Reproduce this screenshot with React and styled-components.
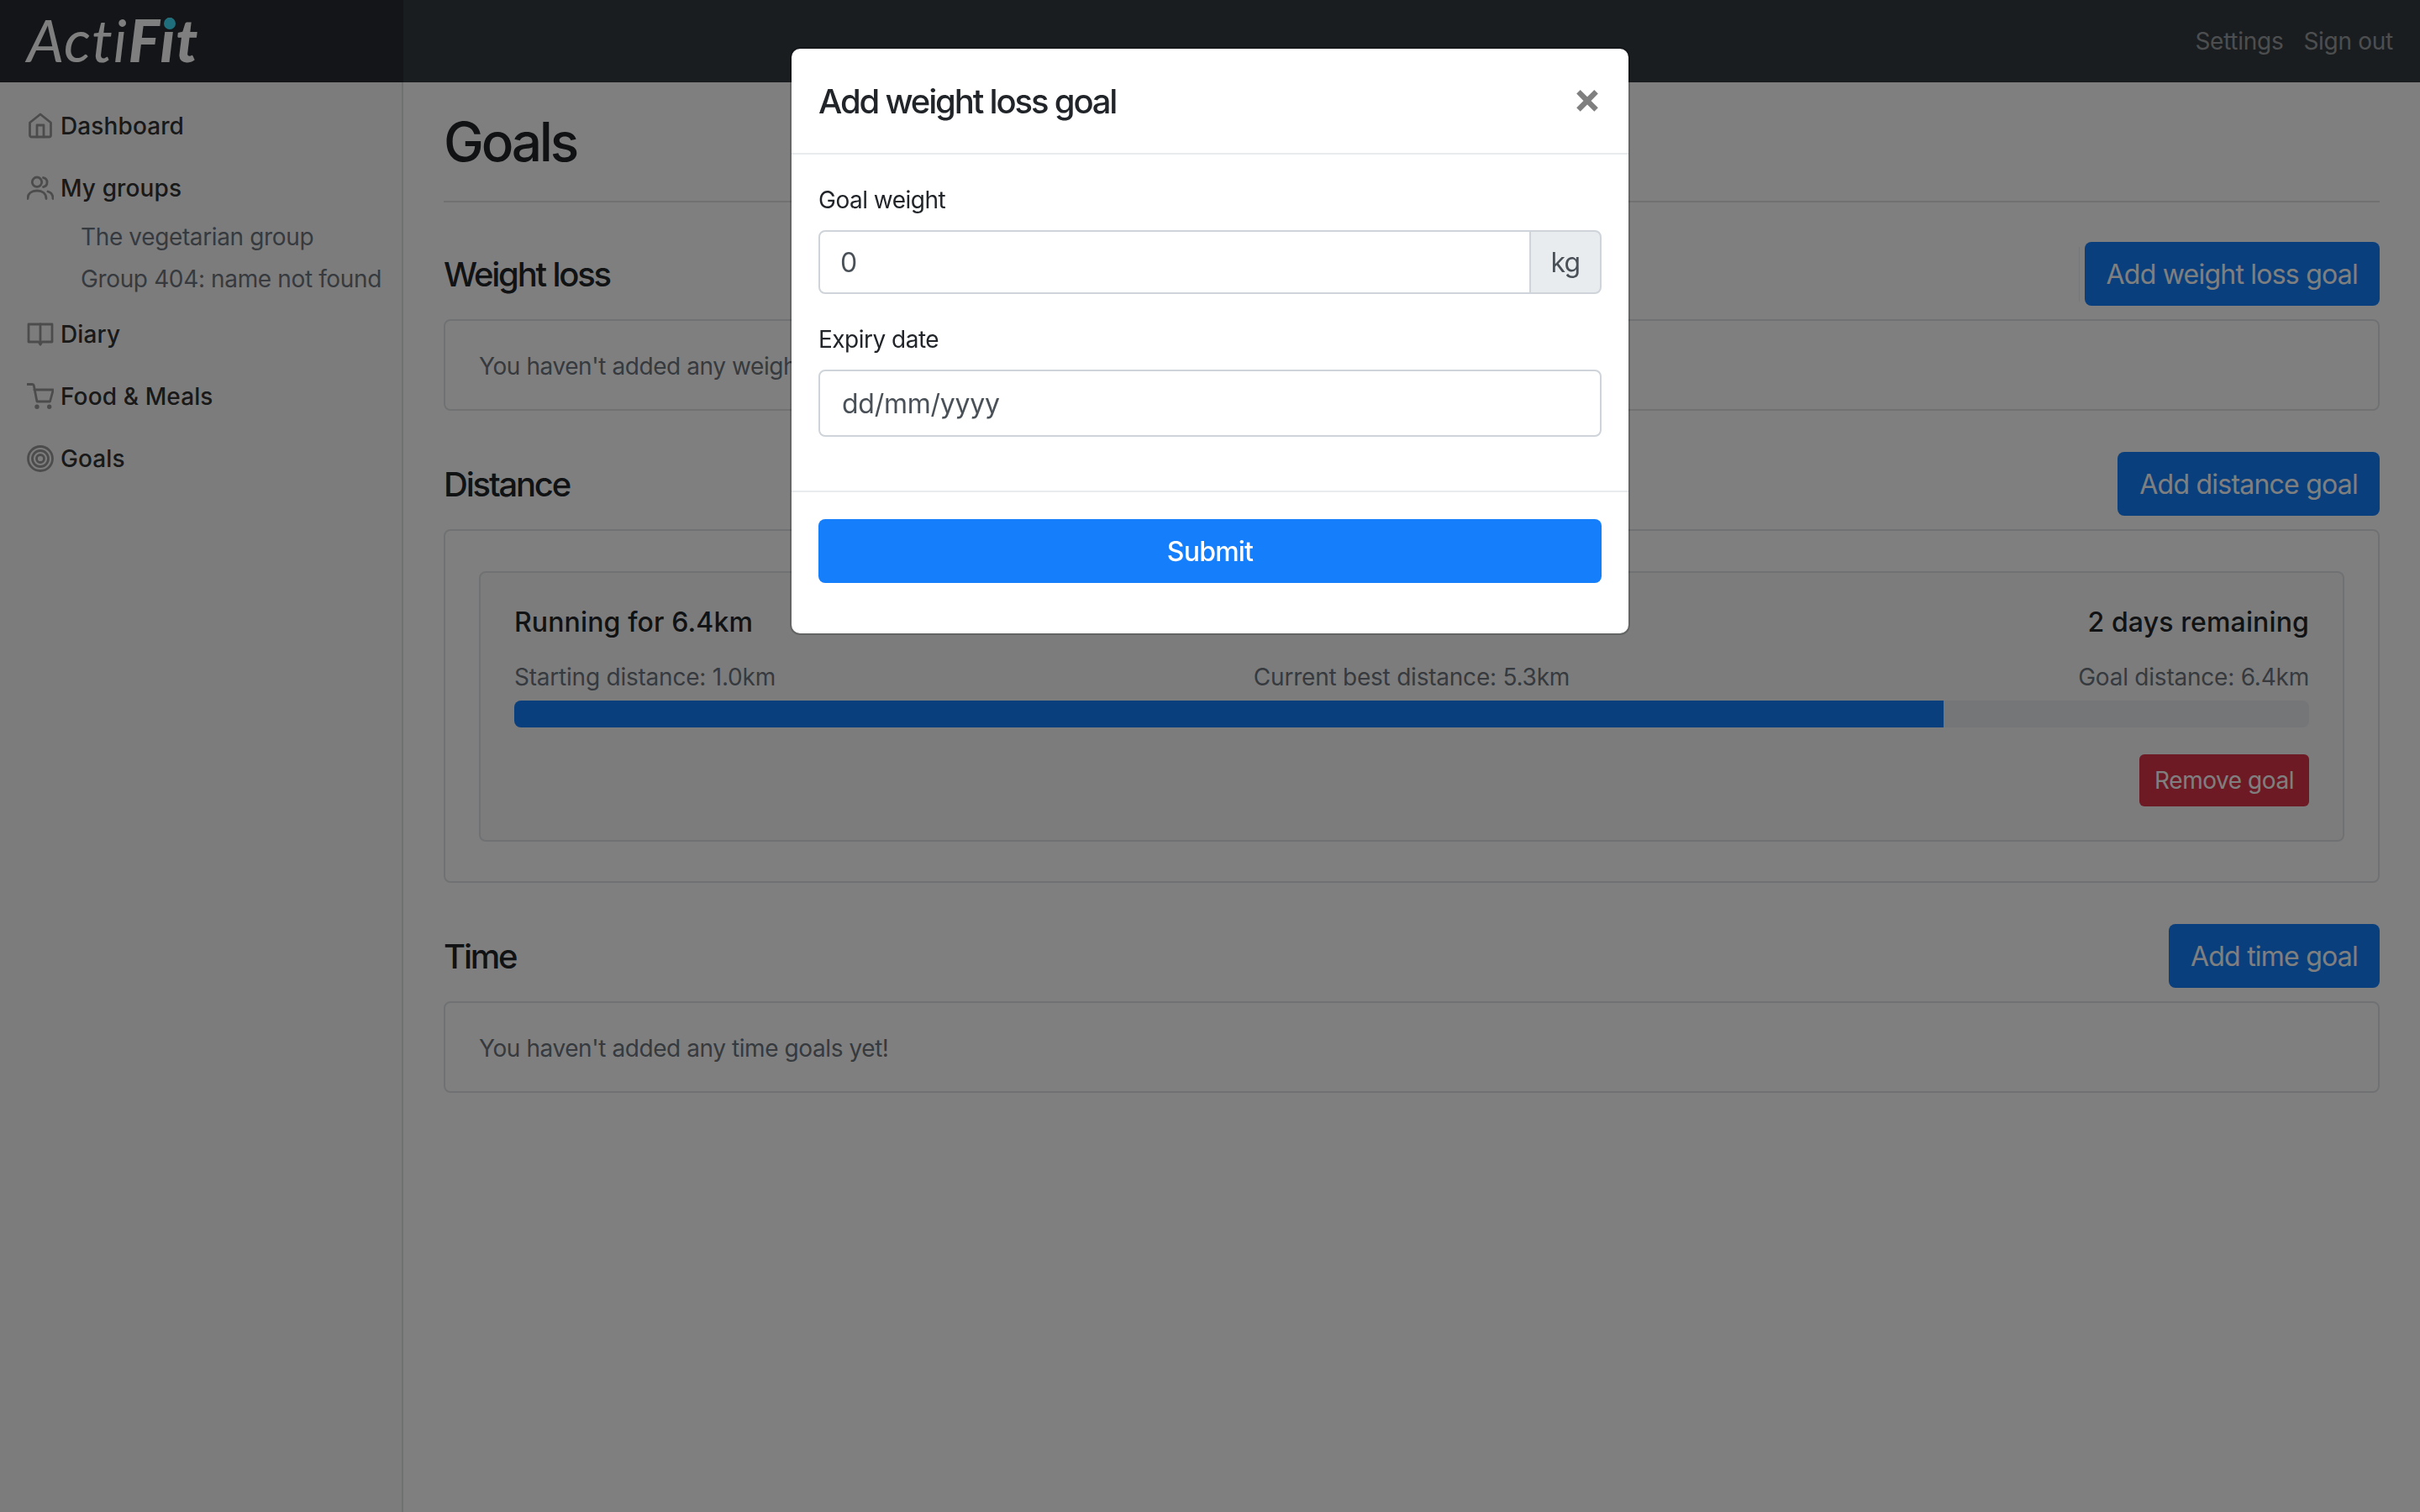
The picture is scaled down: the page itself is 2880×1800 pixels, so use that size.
import React from "react";
import styled, { createGlobalStyle } from "styled-components";

const GlobalStyle = createGlobalStyle`
    html, body {
        margin: 0;
        padding: 0;
        background: #fff;
        font-family: Inter, "Liberation Sans", sans-serif;
        color: #212529;
    }
    * { box-sizing: border-box; }
`;

const Page = styled.div`
    width: 2880px;
    height: 1800px;
    display: flex;
    flex-direction: column;
    overflow: hidden;
`;

const Navbar = styled.header`
    height: 98px;
    flex: none;
    display: flex;
    align-items: center;
    background: #343a40;
`;

const Brand = styled.div`
    position: relative;
    width: 480px;
    height: 100%;
    padding: 0 0 4px 32px;
    display: flex;
    align-items: center;
    background: rgba(0, 0, 0, 0.25);
    color: #fff;
    font-family: Lato, sans-serif;
    font-style: italic;
    font-size: 70px;
    line-height: 1;
`;

const BrandLight = styled.span`
    font-weight: 400;
    letter-spacing: 1px;
`;

const BrandBold = styled.span`
    margin-left: 1px;
    font-weight: 900;
    letter-spacing: 1px;
`;

// teal dot that sits over the i of "Fit"
const BrandDot = styled.span`
    position: absolute;
    left: 195px;
    top: 21px;
    width: 14px;
    height: 14px;
    border-radius: 50%;
    background: #3cdcf8;
`;

const NavLinks = styled.nav`
    margin-left: auto;
    padding-right: 32px;
    display: flex;
    gap: 24px;
`;

const NavLink = styled.a`
    font-size: 28px;
    line-height: 42px;
    letter-spacing: -0.01em;
    color: rgba(255, 255, 255, 0.5);
`;

const Body = styled.div`
    flex: 1;
    display: flex;
`;

const Sidebar = styled.aside`
    width: 480px;
    flex: none;
    padding-top: 15px;
    background: #f8f9fa;
    border-right: 2px solid #dfe0e1;
`;

const SideLink = styled.a`
    height: 74px;
    padding-left: 32px;
    display: flex;
    align-items: center;
    gap: 8px;
    font-size: 28px;
    font-weight: 500;
    letter-spacing: 0.004em;
    color: #333;
`;

const SubLink = styled.a`
    display: block;
    height: 42px;
    margin-bottom: 8px;
    padding-left: 96px;
    font-size: 28px;
    line-height: 42px;
    letter-spacing: -0.013em;
    color: #6c757d;
`;

const Icon = styled.svg`
    width: 32px;
    height: 32px;
    flex: none;
    fill: none;
    stroke: #999;
    stroke-width: 2.8;
    stroke-linecap: round;
    stroke-linejoin: round;
`;

const Main = styled.main`
    flex: 1;
    min-width: 0;
    padding: 0 48px;
`;

const PageHeader = styled.div`
    padding: 32px 0 16px;
    margin-bottom: 47px;
    border-bottom: 2px solid #dee2e6;
`;

const PageTitle = styled.h1`
    margin: 0 0 16px;
    font-size: 64px;
    font-weight: 500;
    line-height: 77px;
    letter-spacing: -0.05em;
`;

const Section = styled.section`
    margin-bottom: 49px;
`;

const SectionHead = styled.div`
    margin-bottom: 16px;
    display: flex;
    align-items: center;
    justify-content: space-between;
`;

const SectionTitle = styled.h2`
    margin: 0;
    font-size: 40px;
    font-weight: 500;
    letter-spacing: -0.055em;
`;

const SectionTools = styled.div`
    display: flex;
    align-items: center;
    gap: 6px;
`;

const ToolDivider = styled.span`
    width: 1px;
    height: 65px;
    background: #dee2e6;
    opacity: 0.6;
`;

const Button = styled.button`
    height: ${(p) => (p.$small ? "62px" : "76px")};
    width: ${(p) => (p.$block ? "100%" : "auto")};
    padding: 0 ${(p) => (p.$small ? "18px" : "26px")};
    border: none;
    border-radius: ${(p) => (p.$small ? "6px" : "8px")};
    background: ${(p) => (p.$danger ? "#dc344a" : "#157efb")};
    color: #fff;
    font-family: inherit;
    font-size: ${(p) => (p.$small ? "28px" : "32px")};
    font-weight: ${(p) => (p.$block ? 500 : 400)};
    letter-spacing: ${(p) => (p.$small ? "-0.016em" : "-0.024em")};
`;

const Panel = styled.div`
    padding: ${(p) => (p.$nested ? "48px 40px 47px" : "33px 40px 30px")};
    border: 2px solid #dee2e6;
    border-radius: 8px;
`;

const EmptyText = styled.p`
    margin: 0;
    font-size: 28px;
    line-height: 42px;
    letter-spacing: -0.015em;
    color: #6c757d;
    white-space: nowrap;
`;

const GoalCard = styled.div`
    padding: 40px;
    border: 2px solid #dee2e6;
    border-radius: 8px;
    background: #f8f9fa;
`;

const GoalHead = styled.div`
    margin-bottom: 25px;
    display: flex;
    justify-content: space-between;
    font-size: 32px;
    font-weight: 500;
    line-height: 38px;
    letter-spacing: 0.004em;
`;

const GoalStats = styled.div`
    margin-bottom: 7px;
    display: grid;
    grid-template-columns: 1fr auto 1fr;
    font-size: 28px;
    line-height: 42px;
    letter-spacing: -0.008em;
    color: #6c757d;
`;

const StatRight = styled.span`
    text-align: right;
`;

const Progress = styled.div`
    height: 32px;
    margin-bottom: 32px;
    border-radius: 8px;
    background: #e9ecef;
    overflow: hidden;
`;

const ProgressBar = styled.div`
    height: 100%;
    background: #157efb;
`;

const GoalActions = styled.div`
    display: flex;
    justify-content: flex-end;
`;

const Backdrop = styled.div`
    position: fixed;
    inset: 0;
    background: rgba(0, 0, 0, 0.5);
`;

const Modal = styled.div`
    width: 1000px;
    margin: 56px auto 0;
    border: 2px solid rgba(0, 0, 0, 0.2);
    border-radius: 12px;
    background: #fff;
    background-clip: padding-box;
`;

const ModalHeader = styled.div`
    height: 126px;
    padding: 0 32px;
    display: flex;
    align-items: center;
    justify-content: space-between;
    border-bottom: 2px solid #e9ecef;
`;

const ModalTitle = styled.h3`
    margin: 0;
    font-size: 40px;
    font-weight: 500;
    letter-spacing: -0.054em;
`;

const CloseMark = styled.span`
    margin-top: -8px;
    font-size: 50px;
    font-weight: 700;
    line-height: 1;
    color: rgba(0, 0, 0, 0.5);
`;

const ModalBody = styled.div`
    padding: 32px;
`;

const FormGroup = styled.div`
    margin-bottom: 32px;
`;

const Label = styled.div`
    padding-top: 1px;
    margin-bottom: 15px;
    font-size: 28px;
    line-height: 42px;
    letter-spacing: -0.018em;
`;

const InputRow = styled.div`
    display: flex;
`;

const Field = styled.div`
    flex: 1;
    height: ${(p) => (p.$date ? "80px" : "76px")};
    padding: 0 ${(p) => (p.$joined ? "24px" : "26px")};
    display: flex;
    align-items: center;
    border: 2px solid #ced4da;
    border-radius: ${(p) => (p.$joined ? "8px 0 0 8px" : "8px")};
    font-size: 32px;
    letter-spacing: -0.008em;
    color: #495057;
`;

const Addon = styled.div`
    width: 86px;
    margin-left: -2px;
    display: flex;
    align-items: center;
    justify-content: center;
    border: 2px solid #ced4da;
    border-radius: 0 8px 8px 0;
    background: #e9ecef;
    font-size: 32px;
    letter-spacing: -0.02em;
    color: #495057;
`;

const ModalFooter = styled.div`
    padding: 32px 32px 60px;
    border-top: 2px solid #e9ecef;
`;

const goal = { start: 1.0, current: 5.3, target: 6.4 };
const progress = ((goal.current - goal.start) / (goal.target - goal.start)) * 100;

export default function App() {
    return (
        <Page>
            <GlobalStyle />
            <Navbar>
                <Brand>
                    <BrandLight>Acti</BrandLight>
                    <BrandBold>Fit</BrandBold>
                    <BrandDot />
                </Brand>
                <NavLinks>
                    <NavLink>Settings</NavLink>
                    <NavLink>Sign out</NavLink>
                </NavLinks>
            </Navbar>
            <Body>
                <Sidebar>
                    <SideLink>
                        <Icon viewBox="0 0 32 32">
                            <path d="M3.5 12 16 2l12.5 10v15a2 2 0 0 1-2 2h-21a2 2 0 0 1-2-2z" />
                            <path d="M12 29V15h8v14" />
                        </Icon>
                        Dashboard
                    </SideLink>
                    <SideLink>
                        <Icon viewBox="0 0 32 32">
                            <circle cx="12" cy="8.7" r="5.7" />
                            <path d="M19.5 3.5a5.6 5.6 0 0 1 0 11" />
                            <path d="M1 28.5C1 22 6 19 12 19s11 3 11 9.5" />
                            <path d="M25 20c3.5 1 6 4 6 8.5" />
                        </Icon>
                        My groups
                    </SideLink>
                    <SubLink>The vegetarian group</SubLink>
                    <SubLink>Group 404: name not found</SubLink>
                    <SideLink>
                        <Icon viewBox="0 0 32 32">
                            <path d="M2 4v21h12l2 3 2-3h12V4z" />
                            <path d="M16 28V4" />
                        </Icon>
                        Diary
                    </SideLink>
                    <SideLink>
                        <Icon viewBox="0 0 32 32">
                            <path d="M.5 1.5h6q1.5 0 1.8 1.5L12 22h15.5L31.3 8H8.8" />
                            <circle cx="12" cy="28.3" r="1.3" />
                            <circle cx="26.7" cy="28.3" r="1.3" />
                        </Icon>
                        Food &amp; Meals
                    </SideLink>
                    <SideLink>
                        <Icon viewBox="0 0 32 32">
                            <circle cx="16" cy="16" r="14.5" />
                            <circle cx="16" cy="16" r="9.5" />
                            <circle cx="16" cy="16" r="4.5" />
                        </Icon>
                        Goals
                    </SideLink>
                </Sidebar>
                <Main>
                    <PageHeader>
                        <PageTitle>Goals</PageTitle>
                    </PageHeader>
                    <Section>
                        <SectionHead>
                            <SectionTitle>Weight loss</SectionTitle>
                            <SectionTools>
                                <ToolDivider />
                                <Button>Add weight loss goal</Button>
                            </SectionTools>
                        </SectionHead>
                        <Panel>
                            <EmptyText>You haven't added any weight loss goals yet!</EmptyText>
                        </Panel>
                    </Section>
                    <Section>
                        <SectionHead>
                            <SectionTitle>Distance</SectionTitle>
                            <Button>Add distance goal</Button>
                        </SectionHead>
                        <Panel $nested>
                            <GoalCard>
                                <GoalHead>
                                    <span>Running for 6.4km</span>
                                    <span>2 days remaining</span>
                                </GoalHead>
                                <GoalStats>
                                    <span>Starting distance: 1.0km</span>
                                    <span>Current best distance: 5.3km</span>
                                    <StatRight>Goal distance: 6.4km</StatRight>
                                </GoalStats>
                                <Progress>
                                    <ProgressBar style={{ width: `${progress}%` }} />
                                </Progress>
                                <GoalActions>
                                    <Button $small $danger>Remove goal</Button>
                                </GoalActions>
                            </GoalCard>
                        </Panel>
                    </Section>
                    <Section>
                        <SectionHead>
                            <SectionTitle>Time</SectionTitle>
                            <Button>Add time goal</Button>
                        </SectionHead>
                        <Panel>
                            <EmptyText>You haven't added any time goals yet!</EmptyText>
                        </Panel>
                    </Section>
                </Main>
            </Body>
            <Backdrop>
                <Modal>
                    <ModalHeader>
                        <ModalTitle>Add weight loss goal</ModalTitle>
                        <CloseMark>×</CloseMark>
                    </ModalHeader>
                    <ModalBody>
                        <FormGroup>
                            <Label>Goal weight</Label>
                            <InputRow>
                                <Field $joined>0</Field>
                                <Addon>kg</Addon>
                            </InputRow>
                        </FormGroup>
                        <FormGroup>
                            <Label>Expiry date</Label>
                            <Field $date>dd/mm/yyyy</Field>
                        </FormGroup>
                    </ModalBody>
                    <ModalFooter>
                        <Button $block>Submit</Button>
                    </ModalFooter>
                </Modal>
            </Backdrop>
        </Page>
    );
}
